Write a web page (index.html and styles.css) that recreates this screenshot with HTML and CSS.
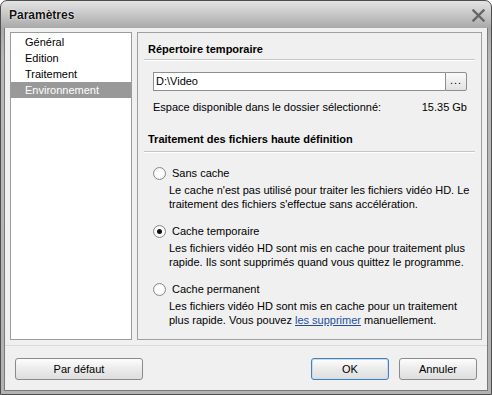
FILE: index.html
```html
<html lang="fr">
    <head>
        <meta charset="UTF-8">
        <title>Paramètres</title>
        <link rel="stylesheet" href="styles.css">
    </head>
    <body>
        <div class="window">
            <div class="titlebar">
                <span class="title">Paramètres</span>
                <svg class="close" width="13" height="13" viewBox="0 0 13 13">
                    <path d="M1.5 1.5 L11.5 11.5 M11.5 1.5 L1.5 11.5" stroke="#666" stroke-width="2.4" stroke-linecap="square"/>
                </svg>
            </div>
            <div class="client">
                <div class="main">
                    <ul class="nav">
                        <li>Général</li>
                        <li>Edition</li>
                        <li>Traitement</li>
                        <li class="selected">Environnement</li>
                    </ul>
                    <div class="panel">
                        <div class="section-title first">Répertoire temporaire</div>
                        <div class="folder-row">
                            <div class="field">D:\Video</div>
                            <div class="browse">...</div>
                        </div>
                        <div class="space-row">
                            <span>Espace disponible dans le dossier sélectionné:</span>
                            <span>15.35 Gb</span>
                        </div>

                        <div class="section-title second">Traitement des fichiers haute définition</div>

                        <div class="option">
                            <div class="radio-line"><span class="radio"></span>Sans cache</div>
                            <div class="desc">Le cache n'est pas utilisé pour traiter les fichiers vidéo HD. Le<br>traitement des fichiers s'effectue sans accélération.</div>
                        </div>
                        <div class="option">
                            <div class="radio-line"><span class="radio checked"></span>Cache temporaire</div>
                            <div class="desc">Les fichiers vidéo HD sont mis en cache pour traitement plus<br>rapide. Ils sont supprimés quand vous quittez le programme.</div>
                        </div>
                        <div class="option">
                            <div class="radio-line"><span class="radio"></span>Cache permanent</div>
                            <div class="desc">Les fichiers vidéo HD sont mis en cache pour un traitement<br>plus rapide. Vous pouvez <a href="#">les supprimer</a> manuellement.</div>
                        </div>
                    </div>
                </div>
                <div class="footer">
                    <button class="btn wide">Par défaut</button>
                    <div class="right-buttons">
                        <button class="btn default">OK</button>
                        <button class="btn">Annuler</button>
                    </div>
                </div>
            </div>
        </div>
    </body>
</html>
```

FILE: styles.css
```css
body {
    margin: 0;
    padding: 0;
    font-family: 'Liberation Sans', Arial, sans-serif;
    font-size: 11px;
    color: #000;
    background: #fff;
}
.window {
    width: 492px;
    height: 395px;
    box-sizing: border-box;
    border: 1px solid #4e4e4e;
    border-radius: 7px 7px 0 0;
    background: linear-gradient(#e4e4e4, #a9a9a9 27px, #b9b9b9 60px, #b2b2b2);
    display: flex;
    flex-direction: column;
    overflow: hidden;
}
.titlebar {
    height: 27px;
    display: flex;
    align-items: center;
    justify-content: space-between;
    padding: 0 6px 0 8px;
}
.title {
    font-size: 12px;
    font-weight: bold;
    color: #111;
    text-shadow: 0 0 2px #fff, 0 0 1px #fff;
}
.close {
    margin-top: 1px;
}
.client {
    flex: 1;
    margin: 0 3px 3px 3px;
    border: 1px solid #7a7a7a;
    border-top: none;
    background: #f0f0f0;
    display: flex;
    flex-direction: column;
}
.main {
    display: flex;
    gap: 5px;
    padding: 4px 5px 0 5px;
    height: 308px;
}
.nav {
    list-style: none;
    margin: 0;
    padding: 1px 0;
    width: 122px;
    box-sizing: border-box;
    border: 1px solid #9c9c9c;
    background: #fff;
}
.nav li {
    height: 16px;
    line-height: 16px;
    padding-left: 14px;
}
.nav li.selected {
    background: #999;
    color: #fff;
}
.panel {
    flex: 1;
    box-sizing: border-box;
    border: 1px solid #a0a0a0;
    background: #f0f0f0;
    padding: 0 6px;
}
.section-title {
    font-weight: bold;
    line-height: 14px;
    padding-left: 4px;
    border-bottom: 1px solid #c6c6c6;
    box-shadow: 0 1px 0 #fff;
}
.section-title.first {
    padding-top: 9px;
    padding-bottom: 3px;
}
.section-title.second {
    margin-top: 18px;
    padding-bottom: 5px;
}
.folder-row {
    display: flex;
    margin: 12px 8px 0 9px;
    height: 19px;
}
.field {
    flex: 1;
    box-sizing: border-box;
    border: 1px solid #8e8e8e;
    border-right: none;
    background: #fff;
    line-height: 17px;
    padding-left: 2px;
}
.browse {
    width: 22px;
    box-sizing: border-box;
    border: 1px solid #8e8e8e;
    border-radius: 0 2px 2px 0;
    background: linear-gradient(#fafafa, #e2e2e2);
    text-align: center;
    line-height: 15px;
    letter-spacing: 1px;
}
.space-row {
    display: flex;
    justify-content: space-between;
    margin: 9px 8px 0 9px;
    line-height: 14px;
}
.option {
    margin-top: 14px;
}
.option + .option {
    margin-top: 13px;
}
.radio-line {
    display: flex;
    align-items: center;
    line-height: 14px;
    padding-left: 9px;
}
.radio {
    width: 11px;
    height: 11px;
    border-radius: 50%;
    border: 1px solid #8a8a8a;
    background: radial-gradient(#fff 40%, #e6e6e6);
    margin-right: 6px;
    position: relative;
}
.radio.checked::after {
    content: "";
    position: absolute;
    left: 3px;
    top: 3px;
    width: 5px;
    height: 5px;
    border-radius: 50%;
    background: #111;
}
.desc {
    margin-top: 3px;
    padding-left: 25px;
    line-height: 14px;
    white-space: nowrap;
}
.desc a {
    color: #1f4f9f;
    text-decoration: underline;
}
.footer {
    margin-top: 5px;
    border-top: 1px solid #dadada;
    padding: 12px 10px 0 10px;
    display: flex;
    justify-content: space-between;
}
.right-buttons {
    display: flex;
    gap: 10px;
}
.btn {
    width: 78px;
    height: 22px;
    box-sizing: border-box;
    border: 1px solid #8a8a8a;
    border-radius: 3px;
    background: linear-gradient(#fdfdfd, #ebebeb 50%, #dedede);
    font-family: 'Liberation Sans', Arial, sans-serif;
    font-size: 11px;
    color: #000;
    padding: 0;
}
.btn.wide {
    width: 128px;
}
.btn.default {
    border-color: #4a7fb5;
    box-shadow: inset 0 0 0 1px #c6dcf0;
}
```
